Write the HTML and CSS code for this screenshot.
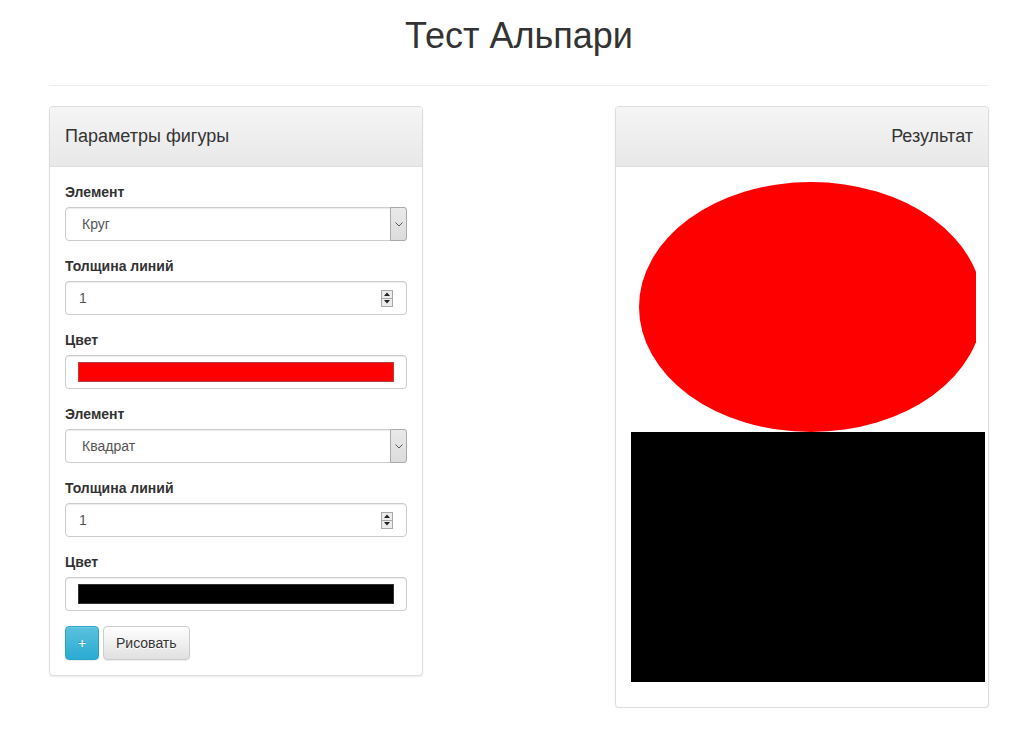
FILE: index.html
```html
<!DOCTYPE html>
<html lang="ru">
<head>
<meta charset="utf-8">
<title>Тест Альпари</title>
<link rel="stylesheet" href="styles.css">
</head>
<body>
<div class="container">
  <h1 class="title">Тест Альпари</h1>
  <hr class="divider">
  <div class="row">
    <div class="panel">
      <div class="panel-heading"><h3 class="panel-title">Параметры фигуры</h3></div>
      <div class="panel-body">
        <div class="form-group">
          <label class="label">Элемент</label>
          <div class="control select"><span class="select-text">Круг</span><span class="select-btn"><svg width="8" height="5" viewBox="0 0 8 5"><polyline points="0.5,0.5 4,4 7.5,0.5" fill="none" stroke="#555" stroke-width="1"/></svg></span></div>
        </div>
        <div class="form-group">
          <label class="label">Толщина линий</label>
          <div class="control number"><span class="number-text">1</span><span class="spin"><span class="spin-btn"><svg width="6" height="4" viewBox="0 0 6 4"><polygon points="0,4 3,0.5 6,4" fill="#222"/></svg></span><span class="spin-btn"><svg width="6" height="4" viewBox="0 0 6 4"><polygon points="0,0 3,3.5 6,0" fill="#222"/></svg></span></span></div>
        </div>
        <div class="form-group">
          <label class="label">Цвет</label>
          <div class="control color"><span class="swatch swatch-red"></span></div>
        </div>
        <div class="form-group">
          <label class="label">Элемент</label>
          <div class="control select"><span class="select-text">Квадрат</span><span class="select-btn"><svg width="8" height="5" viewBox="0 0 8 5"><polyline points="0.5,0.5 4,4 7.5,0.5" fill="none" stroke="#555" stroke-width="1"/></svg></span></div>
        </div>
        <div class="form-group">
          <label class="label">Толщина линий</label>
          <div class="control number"><span class="number-text">1</span><span class="spin"><span class="spin-btn"><svg width="6" height="4" viewBox="0 0 6 4"><polygon points="0,4 3,0.5 6,4" fill="#222"/></svg></span><span class="spin-btn"><svg width="6" height="4" viewBox="0 0 6 4"><polygon points="0,0 3,3.5 6,0" fill="#222"/></svg></span></span></div>
        </div>
        <div class="form-group">
          <label class="label">Цвет</label>
          <div class="control color"><span class="swatch swatch-black"></span></div>
        </div>
        <div class="buttons">
          <button class="btn btn-info">+</button>
          <button class="btn btn-default">Рисовать</button>
        </div>
      </div>
    </div>
    <div class="panel panel-result">
      <div class="panel-heading"><h3 class="panel-title title-right">Результат</h3></div>
      <div class="panel-body result-body">
        <svg class="canvas" width="354" height="500" viewBox="0 0 354 500">
          <defs><clipPath id="clip"><rect x="0" y="0" width="345" height="500"/></clipPath></defs>
          <ellipse cx="180" cy="125" rx="172" ry="125" fill="#ff0000" clip-path="url(#clip)"/>
          <rect x="0" y="250" width="354" height="250" fill="#000000"/>
        </svg>
      </div>
    </div>
  </div>
</div>
</body>
</html>
```
FILE: styles.css
```css
* { box-sizing: border-box; }
html, body { margin: 0; padding: 0; background: #fff; }
body {
  font-family: "Liberation Sans", Arial, Helvetica, sans-serif;
  font-size: 14px;
  line-height: 20px;
  color: #333;
}
.container {
  width: 940px;
  margin-left: 49px;
}
.title {
  margin: 16px 0 29px;
  font-size: 36px;
  line-height: 39.6px;
  font-weight: 500;
  text-align: center;
  color: #333;
}
.divider {
  margin: 0 0 20px;
  border: 0;
  border-top: 1px solid #eee;
  height: 0;
}
.row {
  display: flex;
  justify-content: space-between;
  align-items: flex-start;
}
.panel {
  width: 374px;
  border: 1px solid #ddd;
  border-radius: 4px;
  background: #fff;
  box-shadow: 0 1px 2px rgba(0,0,0,.08);
}
.panel-heading {
  padding: 20px 15px;
  background: linear-gradient(to bottom, #f5f5f5 0%, #e8e8e8 100%);
  border-bottom: 1px solid #ddd;
  border-radius: 3px 3px 0 0;
}
.panel-title {
  margin: 0;
  font-size: 18px;
  line-height: 19.8px;
  font-weight: 500;
  color: #333;
}
.title-right { text-align: right; }
.panel-body { padding: 15px; }
.form-group { margin-bottom: 15px; }
.label {
  display: block;
  font-weight: bold;
  margin-bottom: 5px;
}
.control {
  display: flex;
  align-items: center;
  height: 34px;
  border: 1px solid #ccc;
  border-radius: 4px;
  box-shadow: inset 0 1px 1px rgba(0,0,0,.075);
  color: #555;
  background: #fff;
}
.select-text {
  flex: 1;
  padding-left: 16px;
}
.select-btn {
  width: 17px;
  height: 34px;
  margin: -1px -1px -1px 0;
  display: flex;
  align-items: center;
  justify-content: center;
  background: linear-gradient(to bottom, #e9e9e9, #dcdcdc);
  border: 1px solid #aaa;
  border-radius: 0 3px 3px 0;
}
.number-text {
  flex: 1;
  padding-left: 13px;
}
.spin {
  display: flex;
  flex-direction: column;
  width: 12px;
  height: 17px;
  margin-right: 13px;
  border: 1px solid #a8a8a8;
}
.spin-btn {
  flex: 1;
  display: flex;
  align-items: center;
  justify-content: center;
  background: #ececec;
}
.spin-btn + .spin-btn { border-top: 1px solid #a8a8a8; }
.color {
  padding: 0 12px 0 12px;
}
.swatch {
  display: block;
  width: 100%;
  height: 20px;
  border: 1px solid #666;
}
.swatch-red { background: #ff0000; border-color: #b04040; }
.swatch-black { background: #000; border-color: #333; }
.buttons {
  display: flex;
  gap: 4px;
}
.btn {
  height: 34px;
  padding: 6px 12px;
  font-family: inherit;
  font-size: 14px;
  line-height: 20px;
  border: 1px solid transparent;
  border-radius: 4px;
  cursor: pointer;
}
.btn-info {
  width: 34px;
  padding: 6px 0;
  color: #fff;
  background: linear-gradient(to bottom, #5bc0de 0%, #2aabd2 100%);
  border-color: #28a4c9;
  text-shadow: 0 -1px 0 rgba(0,0,0,.2);
  box-shadow: inset 0 1px 0 rgba(255,255,255,.15), 0 1px 1px rgba(0,0,0,.075);
}
.btn-default {
  color: #333;
  background: linear-gradient(to bottom, #fff 0%, #e0e0e0 100%);
  border-color: #ccc;
  text-shadow: 0 1px 0 #fff;
  box-shadow: inset 0 1px 0 rgba(255,255,255,.15), 0 1px 1px rgba(0,0,0,.075);
}
.result-body {
  padding: 15px 15px 25px;
}
.canvas {
  display: block;
  margin-right: -12px;
}
```
